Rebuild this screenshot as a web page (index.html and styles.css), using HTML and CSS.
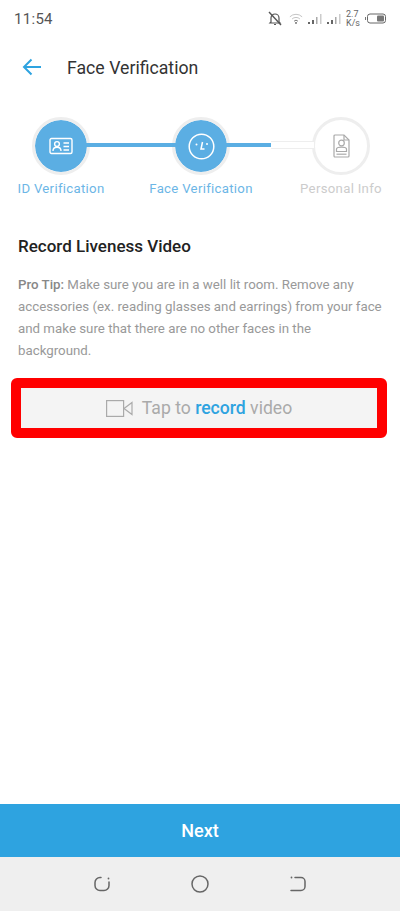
FILE: index.html
```html
<!DOCTYPE html>
<html lang="en">
<head>
  <meta charset="UTF-8" />
  <title>Face Verification</title>
  <link rel="stylesheet" href="styles.css">
</head>
<body>
  <div class="phone">
    <div class="status-bar">
      <span class="clock">11:54</span>
      <div class="status-icons">
        <svg class="bell" width="14" height="15" viewBox="0 0 14 15" fill="none" stroke="#555" stroke-width="1.2">
          <path d="M3 11V7a4 4 0 0 1 8 0v4l1 1H2z" />
          <path d="M6 13.5h2" />
          <path d="M1 1l12 13" stroke-width="1.4" />
        </svg>
        <svg width="14" height="12" viewBox="0 0 16 13" fill="none" stroke="#bbb" stroke-width="1">
          <path d="M1 4a10 10 0 0 1 14 0" />
          <path d="M3.5 6.5a6.5 6.5 0 0 1 9 0" />
          <path d="M5.8 9a3 3 0 0 1 4.4 0" stroke="#666" />
          <circle cx="8" cy="11" r="1" fill="#555" stroke="none" />
        </svg>
        <svg width="14" height="12" viewBox="0 0 14 12">
          <rect x="0" y="9" width="2" height="2" fill="#666" />
          <rect x="4" y="7" width="2" height="4" fill="#666" />
          <rect x="8" y="4" width="1.5" height="7" fill="#aaa" />
          <rect x="12" y="1" width="1.5" height="10" fill="#ccc" />
        </svg>
        <svg width="14" height="12" viewBox="0 0 14 12">
          <rect x="0" y="9" width="2" height="2" fill="#666" />
          <rect x="4" y="7" width="2" height="4" fill="#666" />
          <rect x="8" y="4" width="1.5" height="7" fill="#aaa" />
          <rect x="12" y="1" width="1.5" height="10" fill="#ccc" />
        </svg>
        <div class="speed"><span>2.7</span><span>K/s</span></div>
        <svg width="21" height="11" viewBox="0 0 21 11">
          <rect x="0" y="4" width="1" height="3" fill="#777" />
          <rect x="2.5" y="1" width="18" height="9" rx="2.5" fill="none" stroke="#666" />
          <rect x="12" y="2.5" width="7" height="6" rx="1" fill="#777" />
        </svg>
      </div>
    </div>

    <header class="title-bar">
      <svg width="20" height="18" viewBox="0 0 20 18" fill="none" stroke="#2ea3e0" stroke-width="2">
        <path d="M19 9H2" />
        <path d="M9.5 1.5L2 9l7.5 7.5" />
      </svg>
      <h1>Face Verification</h1>
    </header>

    <div class="stepper">
      <div class="track">
        <div class="track-fill"></div>
        <div class="track-rest"></div>
      </div>
      <div class="step">
        <div class="step-circle active">
          <svg width="24" height="18" viewBox="0 0 24 18" fill="none" stroke="#fff" stroke-width="1.4">
            <rect x="1" y="1.5" width="22" height="15" rx="1.5" />
            <circle cx="8" cy="7" r="2.4" />
            <path d="M4 14c0-5 8-5 8 0" />
            <path d="M14.5 6h5.5M14.5 9.5h5.5M14.5 13h5.5" />
          </svg>
        </div>
        <span class="step-label on">ID Verification</span>
      </div>
      <div class="step">
        <div class="step-circle active">
          <svg width="27" height="27" viewBox="0 0 27 27" fill="none" stroke="#fff" stroke-width="1.5">
            <circle cx="13.5" cy="13.5" r="12.3" />
            <path d="M14.5 9l-1.5 7h3.5" />
            <circle cx="8.5" cy="11.5" r="1" fill="#fff" stroke="none" />
            <circle cx="19" cy="11" r="1" fill="#fff" stroke="none" />
          </svg>
        </div>
        <span class="step-label on">Face Verification</span>
      </div>
      <div class="step">
        <div class="step-circle">
          <svg width="17" height="24" viewBox="0 0 17 24" fill="none" stroke="#aaa" stroke-width="1.2">
            <path d="M1 2a1 1 0 0 1 1-1h9l5 5v16a1 1 0 0 1-1 1H2a1 1 0 0 1-1-1z" />
            <path d="M11 1v5h5" />
            <circle cx="8.5" cy="9" r="2.8" />
            <path d="M3.5 17.5v-2.5c0-2.6 10-2.6 10 0v2.5z" />
            <path d="M3.5 20.2h10" />
          </svg>
        </div>
        <span class="step-label">Personal Info</span>
      </div>
    </div>

    <main class="content">
      <h2>Record Liveness Video</h2>
      <p class="tip"><span class="tip-lead">Pro Tip:</span> Make sure you are in a well lit room. Remove any accessories (ex. reading glasses and earrings) from your face and make sure that there are no other faces in the background.</p>
    </main>

    <div class="record-frame">
      <div class="record-box">
        <svg width="27" height="17" viewBox="0 0 27 17" fill="none" stroke="#aaa" stroke-width="1.2">
          <rect x="0.6" y="0.6" width="17" height="15.8" />
          <path d="M26 2.5v12l-8-6z" />
        </svg>
        <span>Tap to <b>record</b> video</span>
      </div>
    </div>

    <button class="next-btn">Next</button>

    <nav class="nav-bar">
      <svg width="18" height="18" viewBox="0 0 18 18" fill="none" stroke="#666" stroke-width="1.5">
        <path d="M8 2.5H7a5 5 0 0 0-5 5v3a5 5 0 0 0 5 5h4a5 5 0 0 0 5-5V7" stroke-linecap="round" />
        <circle cx="15.5" cy="3.5" r="0.9" fill="#666" stroke="none" />
      </svg>
      <svg width="18" height="18" viewBox="0 0 18 18" fill="none" stroke="#666" stroke-width="1.5">
        <circle cx="9" cy="9" r="8" />
      </svg>
      <svg width="18" height="18" viewBox="0 0 18 18" fill="none" stroke="#666" stroke-width="1.5">
        <path d="M6 2.5h6a4 4 0 0 1 4 4v5a4 4 0 0 1-4 4H2" stroke-linecap="round" />
        <circle cx="2.5" cy="2.5" r="0.9" fill="#666" stroke="none" />
      </svg>
    </nav>
  </div>
</body>
</html>
```

FILE: styles.css
```css
* {
  box-sizing: border-box;
}
body {
  margin: 0;
  background-color: #fff;
  font-family: Roboto, "Liberation Sans", sans-serif;
}
.phone {
  width: 400px;
  height: 911px;
  display: flex;
  flex-direction: column;
  overflow: hidden;
}

.status-bar {
  height: 37px;
  padding: 0 14px;
  display: flex;
  align-items: center;
  justify-content: space-between;
}
.clock {
  font-size: 15px;
  color: #555;
  letter-spacing: 0.3px;
}
.status-icons {
  display: flex;
  align-items: center;
  gap: 5px;
}
.bell {
  margin-right: 2px;
}
.speed {
  display: flex;
  flex-direction: column;
  font-size: 9px;
  line-height: 9px;
  color: #666;
}

.title-bar {
  height: 60px;
  padding: 0 22px;
  display: flex;
  align-items: center;
  gap: 25px;
}
.title-bar h1 {
  margin: 1px 0 0;
  font-size: 17.7px;
  font-weight: 400;
  color: #333;
}

.stepper {
  position: relative;
  padding: 20px 15px 0 17px;
  display: flex;
  justify-content: space-between;
}
.track {
  position: absolute;
  z-index: 1;
  left: 85px;
  top: 44px;
  width: 229px;
  height: 8px;
  display: flex;
  align-items: center;
}
.track-fill {
  width: 186px;
  height: 4px;
  background-color: #5baee3;
}
.track-rest {
  flex: 1;
  height: 8px;
  background-color: #fff;
  border-top: 1px solid #eee;
  border-bottom: 1px solid #eee;
}
.step {
  position: relative;
  display: flex;
  flex-direction: column;
  align-items: center;
  width: 88px;
}
.step-circle {
  width: 58px;
  height: 58px;
  border-radius: 50%;
  border: 3px solid #eee;
  background-color: #fff;
  background-clip: padding-box;
  display: flex;
  align-items: center;
  justify-content: center;
}
.step-circle svg {
  position: relative;
  z-index: 2;
}
.step-circle.active {
  background-color: #5baee3;
}
.step-label {
  margin-top: 6px;
  font-size: 13.2px;
  white-space: nowrap;
  letter-spacing: 0.3px;
  color: #ccc;
}
.step-label.on {
  color: #6cb6e6;
}

.content {
  padding: 0 14px 0 18px;
}
.content h2 {
  margin: 38px 0 0;
  font-size: 17px;
  line-height: 24px;
  font-weight: 500;
  color: #222;
}
.tip {
  margin: 16px 0 0;
  font-size: 13.3px;
  line-height: 22px;
  color: #999;
}
.tip-lead {
  font-weight: 500;
  color: #888;
}

.record-frame {
  margin: 16px 13px 0 11px;
  border: 10px solid #f00;
  border-radius: 6px;
}
.record-box {
  height: 40px;
  background-color: #f4f4f4;
  display: flex;
  align-items: center;
  justify-content: center;
  gap: 9px;
  font-size: 17.6px;
  color: #aaa;
}
.record-box b {
  font-weight: 500;
  color: #2ea3e0;
}

.next-btn {
  margin-top: auto;
  height: 53px;
  border: 0;
  background-color: #2ea3e0;
  color: #fff;
  font-family: inherit;
  font-size: 18px;
  font-weight: 500;
}
.nav-bar {
  height: 54px;
  background-color: #efefef;
  display: flex;
  align-items: center;
  justify-content: center;
  gap: 80px;
}
```
